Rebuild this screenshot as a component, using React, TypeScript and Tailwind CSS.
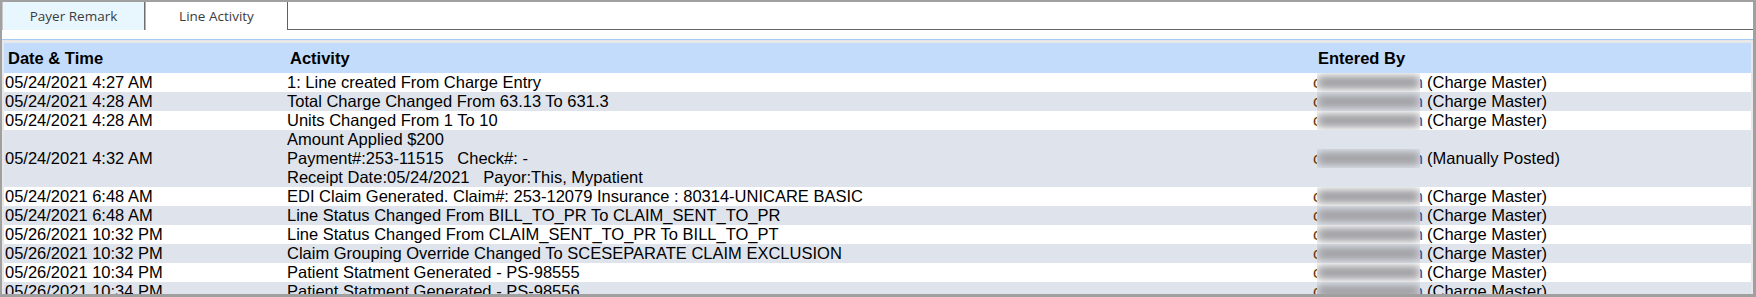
const rows: { date: string; activity: string[]; role: string }[] = [
  { date: '05/24/2021 4:27 AM', activity: ['1: Line created From Charge Entry'], role: '(Charge Master)' },
  { date: '05/24/2021 4:28 AM', activity: ['Total Charge Changed From 63.13 To 631.3'], role: '(Charge Master)' },
  { date: '05/24/2021 4:28 AM', activity: ['Units Changed From 1 To 10'], role: '(Charge Master)' },
  {
    date: '05/24/2021 4:32 AM',
    activity: [
      'Amount Applied $200',
      'Payment#:253-11515   Check#: -',
      'Receipt Date:05/24/2021   Payor:This, Mypatient',
    ],
    role: '(Manually Posted)',
  },
  { date: '05/24/2021 6:48 AM', activity: ['EDI Claim Generated. Claim#: 253-12079 Insurance : 80314-UNICARE BASIC'], role: '(Charge Master)' },
  { date: '05/24/2021 6:48 AM', activity: ['Line Status Changed From BILL_TO_PR To CLAIM_SENT_TO_PR'], role: '(Charge Master)' },
  { date: '05/26/2021 10:32 PM', activity: ['Line Status Changed From CLAIM_SENT_TO_PR To BILL_TO_PT'], role: '(Charge Master)' },
  { date: '05/26/2021 10:32 PM', activity: ['Claim Grouping Override Changed To SCESEPARATE CLAIM EXCLUSION'], role: '(Charge Master)' },
  { date: '05/26/2021 10:34 PM', activity: ['Patient Statment Generated - PS-98555'], role: '(Charge Master)' },
  { date: '05/26/2021 10:34 PM', activity: ['Patient Statment Generated - PS-98556'], role: '(Charge Master)' },
]

// user name is redacted in the source, keep it as a smudge
function Redacted() {
  return (
    <span className="inline-flex items-center align-top h-[19px]">
      <span className="inline-block w-[4px] overflow-hidden text-[#6a3a10]">c</span>
      <span className="inline-block w-[103px] h-[19px] overflow-hidden">
        <span className="block w-[103px] h-[19px] bg-[#a4a4a8] blur-[5px] scale-y-75" />
      </span>
      <span className="inline-flex justify-end w-[3px] overflow-hidden text-[#1f4fa0]">n</span>
    </span>
  )
}

export default function App() {
  return (
    <div className="w-[1756px] h-[297px] overflow-hidden bg-white border-2 border-r-[3px] border-b-[3px] border-[#a0a0a0] flex flex-col font-['Liberation_Sans',Arial,sans-serif] text-black">
      {/* Tabs */}
      <div className="flex h-[28px] shrink-0 font-['Open_Sans',sans-serif] text-[13.5px] text-[#3c3c3c]">
        <div className="w-[143px] bg-[#e8f6fe] border-l border-l-[#c8c8c8] border-r border-r-[#707070] flex items-center justify-center">
          Payer Remark
        </div>
        <div className="w-[143px] bg-white border-l border-l-[#b4b4b4] border-r border-r-[#606060] flex items-center justify-center">
          Line Activity
        </div>
        <div className="flex-1 border-b border-[#646464]" />
      </div>

      {/* Grid */}
      <div className="mt-[9px] flex-1 min-h-0 border-t border-[#a6cbf3] bg-[#e8e8e8] pt-[3px] px-[2px] flex flex-col">
        <div className="grid grid-cols-[282px_1026px_1fr] h-[30px] shrink-0 bg-[#c4dcfc] font-bold text-[16.5px] items-center">
          <div className="pl-[4px]">Date &amp; Time</div>
          <div className="pl-[4px]">Activity</div>
          <div className="pl-[6px]">Entered By</div>
        </div>
        <div className="flex-1 min-h-0 overflow-hidden">
          {rows.map((r, i) => (
            <div
              key={i}
              className={`grid grid-cols-[282px_1026px_1fr] text-[16.5px] leading-[19px] items-center ${
                i % 2 === 0 ? 'bg-white' : 'bg-[#dfe4ec]'
              }`}
            >
              <div className="pl-[1px] whitespace-nowrap">{r.date}</div>
              <div className="pl-[1px]">
                {r.activity.map((line, j) => (
                  <div key={j} className="whitespace-pre">
                    {line}
                  </div>
                ))}
              </div>
              <div className="pl-[1px] whitespace-nowrap flex items-center">
                <Redacted />
                <span className="ml-[4px]">{r.role}</span>
              </div>
            </div>
          ))}
        </div>
      </div>
    </div>
  )
}
